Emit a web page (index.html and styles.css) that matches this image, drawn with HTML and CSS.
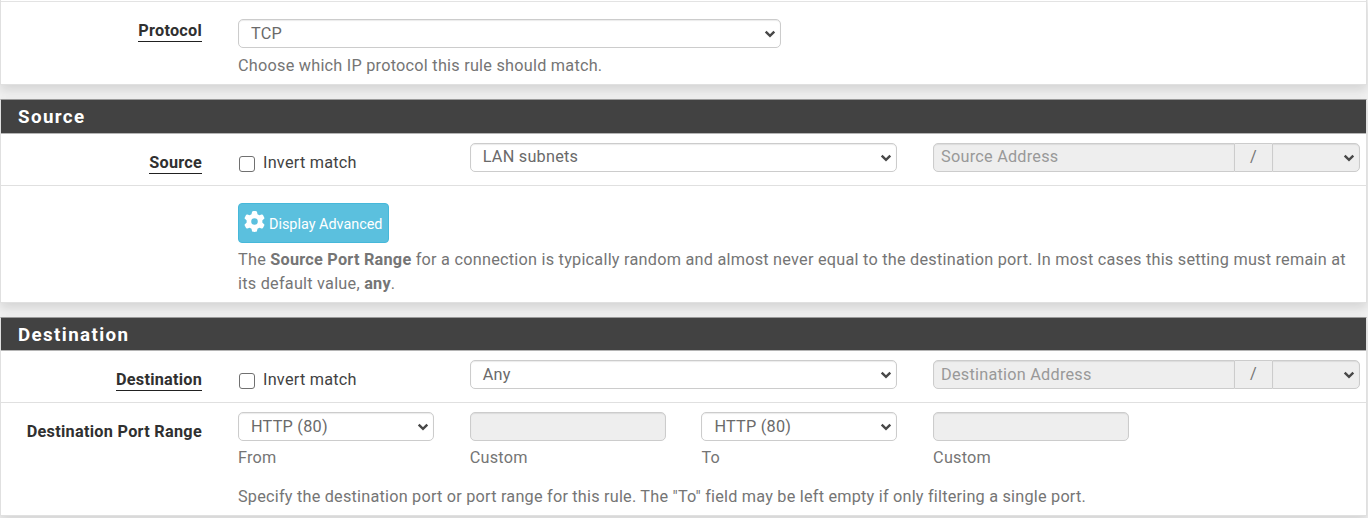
FILE: index.html
```html
<!DOCTYPE html>
<html lang="en">
<head>
<meta charset="utf-8">
<title>Firewall Rule</title>
<link rel="stylesheet" href="styles.css">
</head>
<body>
<svg class="defs" width="0" height="0" aria-hidden="true">
  <symbol id="chevron" viewBox="0 0 12 8"><path d="M1.7 1.6 6 5.9 10.3 1.6" fill="none" stroke="currentColor" stroke-width="2.4"/></symbol>
</svg>
<main class="page">
  <section class="panel panel-edit">
    <div class="row row-protocol">
      <div class="label"><span class="underlined">Protocol</span></div>
      <div class="content">
        <div class="field select protocol"><span>TCP</span><svg class="chevron"><use href="#chevron"/></svg></div>
        <p class="help">Choose which IP protocol this rule should match.</p>
      </div>
    </div>
  </section>

  <section class="panel panel-source">
    <h2 class="heading">Source</h2>
    <div class="row row-address">
      <div class="label"><span class="underlined">Source</span></div>
      <div class="content columns">
        <label class="check"><input type="checkbox" class="box"><span>Invert match</span></label>
        <div class="field select wide"><span>LAN subnets</span><svg class="chevron"><use href="#chevron"/></svg></div>
        <div class="group">
          <div class="field disabled address">Source Address</div>
          <div class="addon">/</div>
          <div class="field select disabled mask"><svg class="chevron"><use href="#chevron"/></svg></div>
        </div>
      </div>
    </div>
    <div class="row row-advanced">
      <div class="label"></div>
      <div class="content">
        <button class="button" type="button">
          <svg class="cog" viewBox="0 0 512 512"><path fill="currentColor" d="M495.900 166.600c3.200 8.700.5 18.400-6.400 24.600l-43.300 39.400c1.100 8.300 1.700 16.800 1.700 25.400s-.6 17.100-1.700 25.400l43.300 39.400c6.900 6.200 9.600 15.900 6.400 24.600-4.400 11.900-9.700 23.300-15.800 34.300l-4.700 8.100c-6.600 11-14 21.400-22.100 31.200-5.900 7.200-15.700 9.600-24.500 6.800l-55.700-17.700c-13.400 10.300-28.200 18.900-44 25.400l-12.500 57.100c-2 9.100-9 16.300-18.200 17.800-13.800 2.300-28 3.500-42.500 3.500s-28.700-1.200-42.500-3.500c-9.200-1.500-16.200-8.700-18.200-17.800l-12.500-57.100c-15.800-6.500-30.600-15.100-44-25.400l-55.600 17.800c-8.800 2.800-18.600.3-24.500-6.800-8.100-9.800-15.500-20.200-22.100-31.200l-4.700-8.100c-6.100-11-11.400-22.400-15.800-34.300-3.200-8.700-.5-18.400 6.400-24.600l43.300-39.400c-1.100-8.400-1.700-16.900-1.700-25.500s.6-17.100 1.700-25.400l-43.300-39.400c-6.900-6.200-9.600-15.900-6.400-24.600 4.400-11.900 9.700-23.300 15.800-34.300l4.700-8.100c6.600-11 14-21.400 22.100-31.200 5.900-7.200 15.700-9.600 24.500-6.800l55.700 17.700c13.400-10.300 28.200-18.900 44-25.400l12.500-57.100c2-9.100 9-16.300 18.200-17.800C227.300 1.200 241.500 0 256 0s28.700 1.200 42.500 3.500c9.200 1.500 16.200 8.700 18.200 17.800l12.500 57.100c15.800 6.500 30.600 15.100 44 25.400l55.700-17.700c8.800-2.800 18.600-.3 24.500 6.800 8.100 9.800 15.500 20.200 22.100 31.200l4.700 8.100c6.100 11 11.400 22.400 15.800 34.300zM256 336a80 80 0 1 0 0-160 80 80 0 1 0 0 160z"/></svg>
          <span>Display Advanced</span>
        </button>
        <p class="help">The <b>Source Port Range</b> for a connection is typically random and almost never equal to the destination port. In most cases this setting must remain at its default value, <b>any</b>.</p>
      </div>
    </div>
  </section>

  <section class="panel panel-destination">
    <h2 class="heading">Destination</h2>
    <div class="row row-address">
      <div class="label"><span class="underlined">Destination</span></div>
      <div class="content columns">
        <label class="check"><input type="checkbox" class="box"><span>Invert match</span></label>
        <div class="field select wide"><span>Any</span><svg class="chevron"><use href="#chevron"/></svg></div>
        <div class="group">
          <div class="field disabled address">Destination Address</div>
          <div class="addon">/</div>
          <div class="field select disabled mask"><svg class="chevron"><use href="#chevron"/></svg></div>
        </div>
      </div>
    </div>
    <div class="row row-ports">
      <div class="label">Destination Port Range</div>
      <div class="content">
        <div class="columns">
          <div class="port"><div class="field select"><span>HTTP (80)</span><svg class="chevron"><use href="#chevron"/></svg></div><p class="help">From</p></div>
          <div class="port"><div class="field disabled"></div><p class="help">Custom</p></div>
          <div class="port"><div class="field select"><span>HTTP (80)</span><svg class="chevron"><use href="#chevron"/></svg></div><p class="help">To</p></div>
          <div class="port"><div class="field disabled"></div><p class="help">Custom</p></div>
        </div>
        <p class="help note">Specify the destination port or port range for this rule. The "To" field may be left empty if only filtering a single port.</p>
      </div>
    </div>
  </section>
</main>
</body>
</html>
```
FILE: styles.css
```css
* { box-sizing: border-box; }
body {
  margin: 0;
  background: #f1f1f1;
  color: #424242;
  font: 16.25px/24px Roboto, sans-serif;
  letter-spacing: 0.24px;
  overflow: hidden;
}
.defs { display: block; position: absolute; }
.page { height: 518px; overflow: hidden; }
.panel {
  width: 1367px;
  margin-bottom: 14px;
  background: #fff;
  border: 1px solid #e0e0e0;
  box-shadow: 0 5px 10px rgba(0, 0, 0, 0.12);
}
.panel-edit { height: 85px; padding-top: 1px; border-top: 0; }
.panel-source { height: 204px; }
.panel-destination { height: 199px; }
.heading {
  height: 34px;
  margin: 0;
  padding-left: 17px;
  background: #424242;
  border-bottom: 1px solid #b5b5b5;
  color: #fff;
  font-size: 18.75px;
  font-weight: 700;
  line-height: 34px;
  letter-spacing: 1.38px;
}
.panel-destination .heading { height: 33px; }
.panel-source, .panel-destination { border-top-color: #9a9a9a; }
.row { display: grid; grid-template-columns: 201px 1fr; column-gap: 36px; }
.row-protocol { border-top: 1px solid #e3e3e3; padding-top: 17px; }
.row-address { height: 52px; padding-top: 9px; border-bottom: 1px solid #e0e0e0; }
.row-advanced { padding-top: 17px; }
.row-ports { padding-top: 9px; }
.label { text-align: right; font-weight: 700; color: #303030; }
.row-address .label { padding-top: 8px; }
.row-ports .label { padding-top: 8px; letter-spacing: 0.28px; }
.underlined { display: inline-block; border-bottom: 1px solid #212121; line-height: 21px; }
.columns { display: grid; grid-template-columns: repeat(4, 196px); column-gap: 35.7px; }
.field {
  display: flex;
  align-items: center;
  height: 29px;
  border: 1px solid #ccc;
  border-radius: 5px;
  background: #fff;
  box-shadow: inset 0 1px 1px rgba(0, 0, 0, 0.08);
  color: #6a6a6a;
}
.select { justify-content: space-between; padding: 0 4px 0 12px; }
.disabled { background: #eee; color: #999; }
.protocol { width: 543px; }
.wide { grid-column: span 2; }
.panel-source .wide span { padding-bottom: 2px; }
.chevron { width: 12px; height: 8px; margin-left: auto; color: #484848; }
.help { margin: 0; color: #757575; }
.row-protocol .help { margin-top: 6px; }
.check { display: flex; align-items: center; height: 24px; margin-top: 8px; gap: 8px; }
.box {
  appearance: none;
  width: 16px;
  height: 16px;
  margin: 1px 0 0 1px;
  border: 1px solid #707070;
  border-radius: 3px;
  background: #fff;
}
.group { display: flex; width: 427px; }
.address { width: 302px; padding-left: 7px; border-radius: 5px 0 0 5px; }
.panel-source .address { padding-bottom: 2px; }
.addon {
  width: 37px;
  height: 29px;
  border: solid #ccc;
  border-width: 1px 0;
  background: #eee;
  color: #757575;
  line-height: 26px;
  text-align: center;
}
.mask { width: 88px; border-radius: 0 5px 5px 0; }
.button {
  display: flex;
  align-items: center;
  gap: 4px;
  width: 151px;
  height: 40px;
  padding: 0 5px;
  border: 1px solid #46b8da;
  border-radius: 4px;
  background: #5bc0de;
  color: #fff;
  font: 14.4px/22px Roboto, sans-serif;
  white-space: nowrap;
}
.button span { padding-top: 3px; }
.cog { flex: none; width: 21px; height: 21px; margin-top: -3px; }
.row-advanced .help { margin-top: 5px; }
.port .help { margin-top: 5px; }
.help.note { margin-top: 15px; letter-spacing: 0.215px; }
```
